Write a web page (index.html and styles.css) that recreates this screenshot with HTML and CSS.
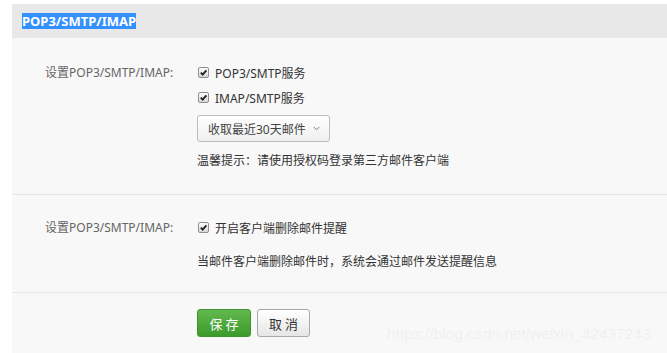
FILE: index.html
```html
<!DOCTYPE html>
<html lang="zh-CN">
<head>
<meta charset="utf-8">
<link rel="stylesheet" href="styles.css">
</head>
<body>
<div class="panel">
  <div class="panel-head"><span class="title">POP3/SMTP/IMAP</span></div>
  <div class="section">
    <div class="label">设置POP3/SMTP/IMAP:</div>
    <div class="content">
      <label class="check"><span class="box"><svg viewBox="0 0 10 10"><path d="M2 5.2 L4.1 7.4 L8.2 2.6" /></svg></span>POP3/SMTP服务</label>
      <label class="check"><span class="box"><svg viewBox="0 0 10 10"><path d="M2 5.2 L4.1 7.4 L8.2 2.6" /></svg></span>IMAP/SMTP服务</label>
      <div class="select">收取最近30天邮件<svg class="chev" viewBox="0 0 8 5"><path d="M0.8 0.8 L4 4 L7.2 0.8" /></svg></div>
      <div class="hint">温馨提示：请使用授权码登录第三方邮件客户端</div>
    </div>
  </div>
  <div class="section second">
    <div class="label">设置POP3/SMTP/IMAP:</div>
    <div class="content">
      <label class="check"><span class="box"><svg viewBox="0 0 10 10"><path d="M2 5.2 L4.1 7.4 L8.2 2.6" /></svg></span>开启客户端删除邮件提醒</label>
      <div class="hint hint2">当邮件客户端删除邮件时，系统会通过邮件发送提醒信息</div>
    </div>
  </div>
  <div class="actions">
    <button class="btn save">保 存</button>
    <button class="btn cancel">取 消</button>
    <span class="watermark">https://blog.csdn.net/weixin_42437243</span>
  </div>
</div>
</body>
</html>
```
FILE: styles.css
```css
html, body { margin: 0; padding: 0; background: #fff; }
body {
  font-family: "Noto Sans", "Noto Sans CJK SC", sans-serif;
  font-size: 12px;
  color: #333;
}
.panel {
  margin: 4px 0 0 12px;
  background: #f8f8f8;
  height: 349px;
  position: relative;
  overflow: hidden;
}
.panel-head {
  height: 34px;
  background: #e8e8e8;
  display: flex;
  align-items: center;
  padding-left: 10px;
}
.title {
  background: #3390ff;
  color: #fff;
  font-weight: bold;
  font-size: 13px;
  line-height: 16px;
}
.section {
  display: grid;
  grid-template-columns: 185px 1fr;
  padding: 22px 0 25px;
  border-bottom: 1px solid #e6e6e6;
}
.section.second { padding: 20px 0 22px; }
.label {
  padding-left: 33px;
  color: #666;
  line-height: 25px;
}
.content { display: flex; flex-direction: column; align-items: flex-start; }
.check {
  display: flex;
  align-items: center;
  height: 25px;
  color: #333;
}
.box {
  width: 9px;
  height: 9px;
  border: 1px solid #8f8f8f;
  border-radius: 2px;
  background: linear-gradient(#fdfdfd, #d8d8d8);
  margin: 0 6px 0 1px;
  display: flex;
}
.box svg { width: 9px; height: 9px; }
.box path { fill: none; stroke: #222; stroke-width: 2; }
.select {
  margin-top: 5px;
  width: 133px;
  box-sizing: border-box;
  height: 27px;
  border: 1px solid #bdbdbd;
  border-radius: 3px;
  background: linear-gradient(#fff, #efefef);
  display: flex;
  align-items: center;
  padding-left: 10px;
  color: #444;
}
.chev { width: 7px; height: 5px; margin-left: 7px; }
.chev path { fill: none; stroke: #777; stroke-width: 1.1; }
.hint { margin-top: 11px; line-height: 16px; color: #333; }
.hint2 { margin-top: 14px; }
.actions {
  display: flex;
  gap: 6px;
  padding: 16px 0 0 185px;
}
.btn {
  height: 28px;
  border-radius: 3px;
  font-family: "Noto Sans CJK SC", sans-serif;
  font-size: 13px;
  padding: 0;
  box-sizing: border-box;
}
.save {
  width: 54px;
  border: 1px solid #3f9331;
  background: linear-gradient(#62b84e, #3c9b2c);
  color: #fff;
}
.cancel {
  width: 53px;
  border: 1px solid #a8a8a8;
  background: linear-gradient(#fff, #e6e6e6);
  color: #333;
}
.watermark {
  position: absolute;
  left: 375px;
  top: 321px;
  font-family: "Liberation Sans", sans-serif;
  font-size: 15.5px;
  white-space: nowrap;
  color: #efefef;
  text-shadow: 0 0 1px #fff;
}
```
